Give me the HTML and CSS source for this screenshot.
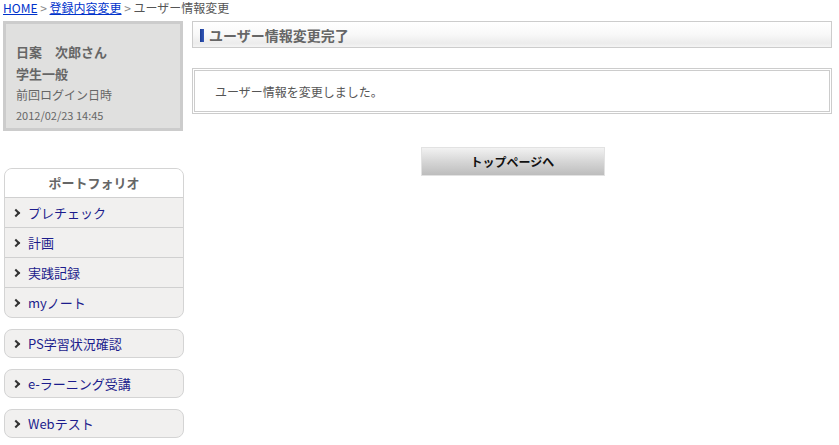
FILE: index.html
```html
<!DOCTYPE html>
<html lang="ja">
<head>
    <meta charset="UTF-8">
    <title>ユーザー情報変更完了</title>
    <link rel="stylesheet" href="styles.css">
</head>
<body>
<div class="breadcrumb">
    <a href="#">HOME</a> <span class="sep">&gt;</span> <a href="#">登録内容変更</a> <span class="sep">&gt;</span> ユーザー情報変更
</div>
<div class="wrapper">
    <div class="side">
        <div class="profile">
            <div class="name">日案　次郎さん</div>
            <div class="kind">学生一般</div>
            <div class="last">前回ログイン日時</div>
            <div class="date">2012/02/23 14:45</div>
        </div>
        <div class="menu">
            <div class="menu-head">ポートフォリオ</div>
            <a class="menu-item" href="#"><span class="arrow"></span>プレチェック</a>
            <a class="menu-item" href="#"><span class="arrow"></span>計画</a>
            <a class="menu-item" href="#"><span class="arrow"></span>実践記録</a>
            <a class="menu-item" href="#"><span class="arrow"></span>myノート</a>
        </div>
        <a class="menu-box" href="#"><span class="arrow"></span>PS学習状況確認</a>
        <a class="menu-box" href="#"><span class="arrow"></span>e-ラーニング受講</a>
        <a class="menu-box" href="#"><span class="arrow"></span>Webテスト</a>
    </div>
    <div class="main">
        <div class="title"><span class="title-bar"></span>ユーザー情報変更完了</div>
        <div class="message">ユーザー情報を変更しました。</div>
        <div class="buttons">
            <button class="top-btn">トップページへ</button>
        </div>
    </div>
</div>
</body>
</html>
```

FILE: styles.css
```css
* {
    font-family: "Noto Sans CJK JP", "Liberation Sans", sans-serif;
    box-sizing: border-box;
}
body {
    margin: 0;
    padding: 0 7px 0 3px;
    background-color: #FFFFFF;
    color: #555555;
}
.breadcrumb {
    font-size: 12px;
    line-height: 14px;
    height: 21px;
    padding-top: 1px;
    color: #555555;
}
.breadcrumb a {
    color: #0033CC;
    text-decoration: underline;
}
.breadcrumb .sep {
    color: #888888;
}
.wrapper {
    display: flex;
    gap: 9px;
}
.side {
    width: 180px;
    flex-shrink: 0;
}
.profile {
    width: 180px;
    height: 110px;
    border: 3px solid #CCCCCC;
    background-color: #E0E0DF;
    padding: 17px 0 0 10px;
    color: #666666;
}
.name, .kind {
    font-size: 13px;
    font-weight: bold;
    line-height: 22px;
}
.last {
    font-size: 12px;
    line-height: 20px;
}
.date {
    font-size: 11px;
    line-height: 20px;
}
.menu {
    margin-top: 37px;
    margin-left: 1px;
    width: 180px;
    border: 1px solid #D4D4D4;
    border-radius: 8px;
    overflow: hidden;
    background-color: #F1F0EF;
}
.menu-head {
    background-color: #FFFFFF;
    height: 28px;
    line-height: 28px;
    text-align: center;
    font-size: 13px;
    font-weight: bold;
    color: #666666;
}
.menu-item, .menu-box {
    display: flex;
    align-items: center;
    height: 30px;
    border-top: 1px solid #D0D0D0;
    font-size: 13px;
    color: #1C1C8C;
    text-decoration: none;
    padding-left: 8px;
}
.menu-box {
    margin-top: 11px;
    margin-left: 1px;
    width: 180px;
    height: 29px;
    border: 1px solid #D4D4D4;
    border-radius: 8px;
    background-color: #F1F0EF;
}
.arrow {
    width: 6px;
    height: 6px;
    border-top: 2.5px solid #333333;
    border-right: 2.5px solid #333333;
    transform: rotate(45deg);
    margin-right: 9px;
    margin-top: 1px;
}
.main {
    width: 640px;
}
.title {
    height: 27px;
    border: 1px solid #CCCCCC;
    background: linear-gradient(#FFFFFF, #F8F8F8 50%, #ECECEC 85%, #F4F4F4);
    display: flex;
    align-items: center;
    padding-left: 7px;
    font-size: 14px;
    font-weight: bold;
    color: #666666;
}
.title-bar {
    width: 4px;
    height: 13px;
    background: linear-gradient(90deg, #1B3C94, #3558B8);
    margin-right: 5px;
    margin-top: 1px;
}
.message {
    margin-top: 20px;
    height: 46px;
    border: 3px double #CCCCCC;
    padding-left: 20px;
    display: flex;
    align-items: center;
    font-size: 12px;
    color: #555555;
}
.buttons {
    display: flex;
    justify-content: center;
    margin-top: 33px;
    padding-left: 1px;
}
.top-btn {
    width: 184px;
    height: 29px;
    border: 1px solid #E2E2E2;
    background: linear-gradient(#F2F2F2, #D6D6D6 50%, #BDBDBD);
    font-size: 12px;
    font-weight: bold;
    color: #111111;
    cursor: pointer;
}
```
